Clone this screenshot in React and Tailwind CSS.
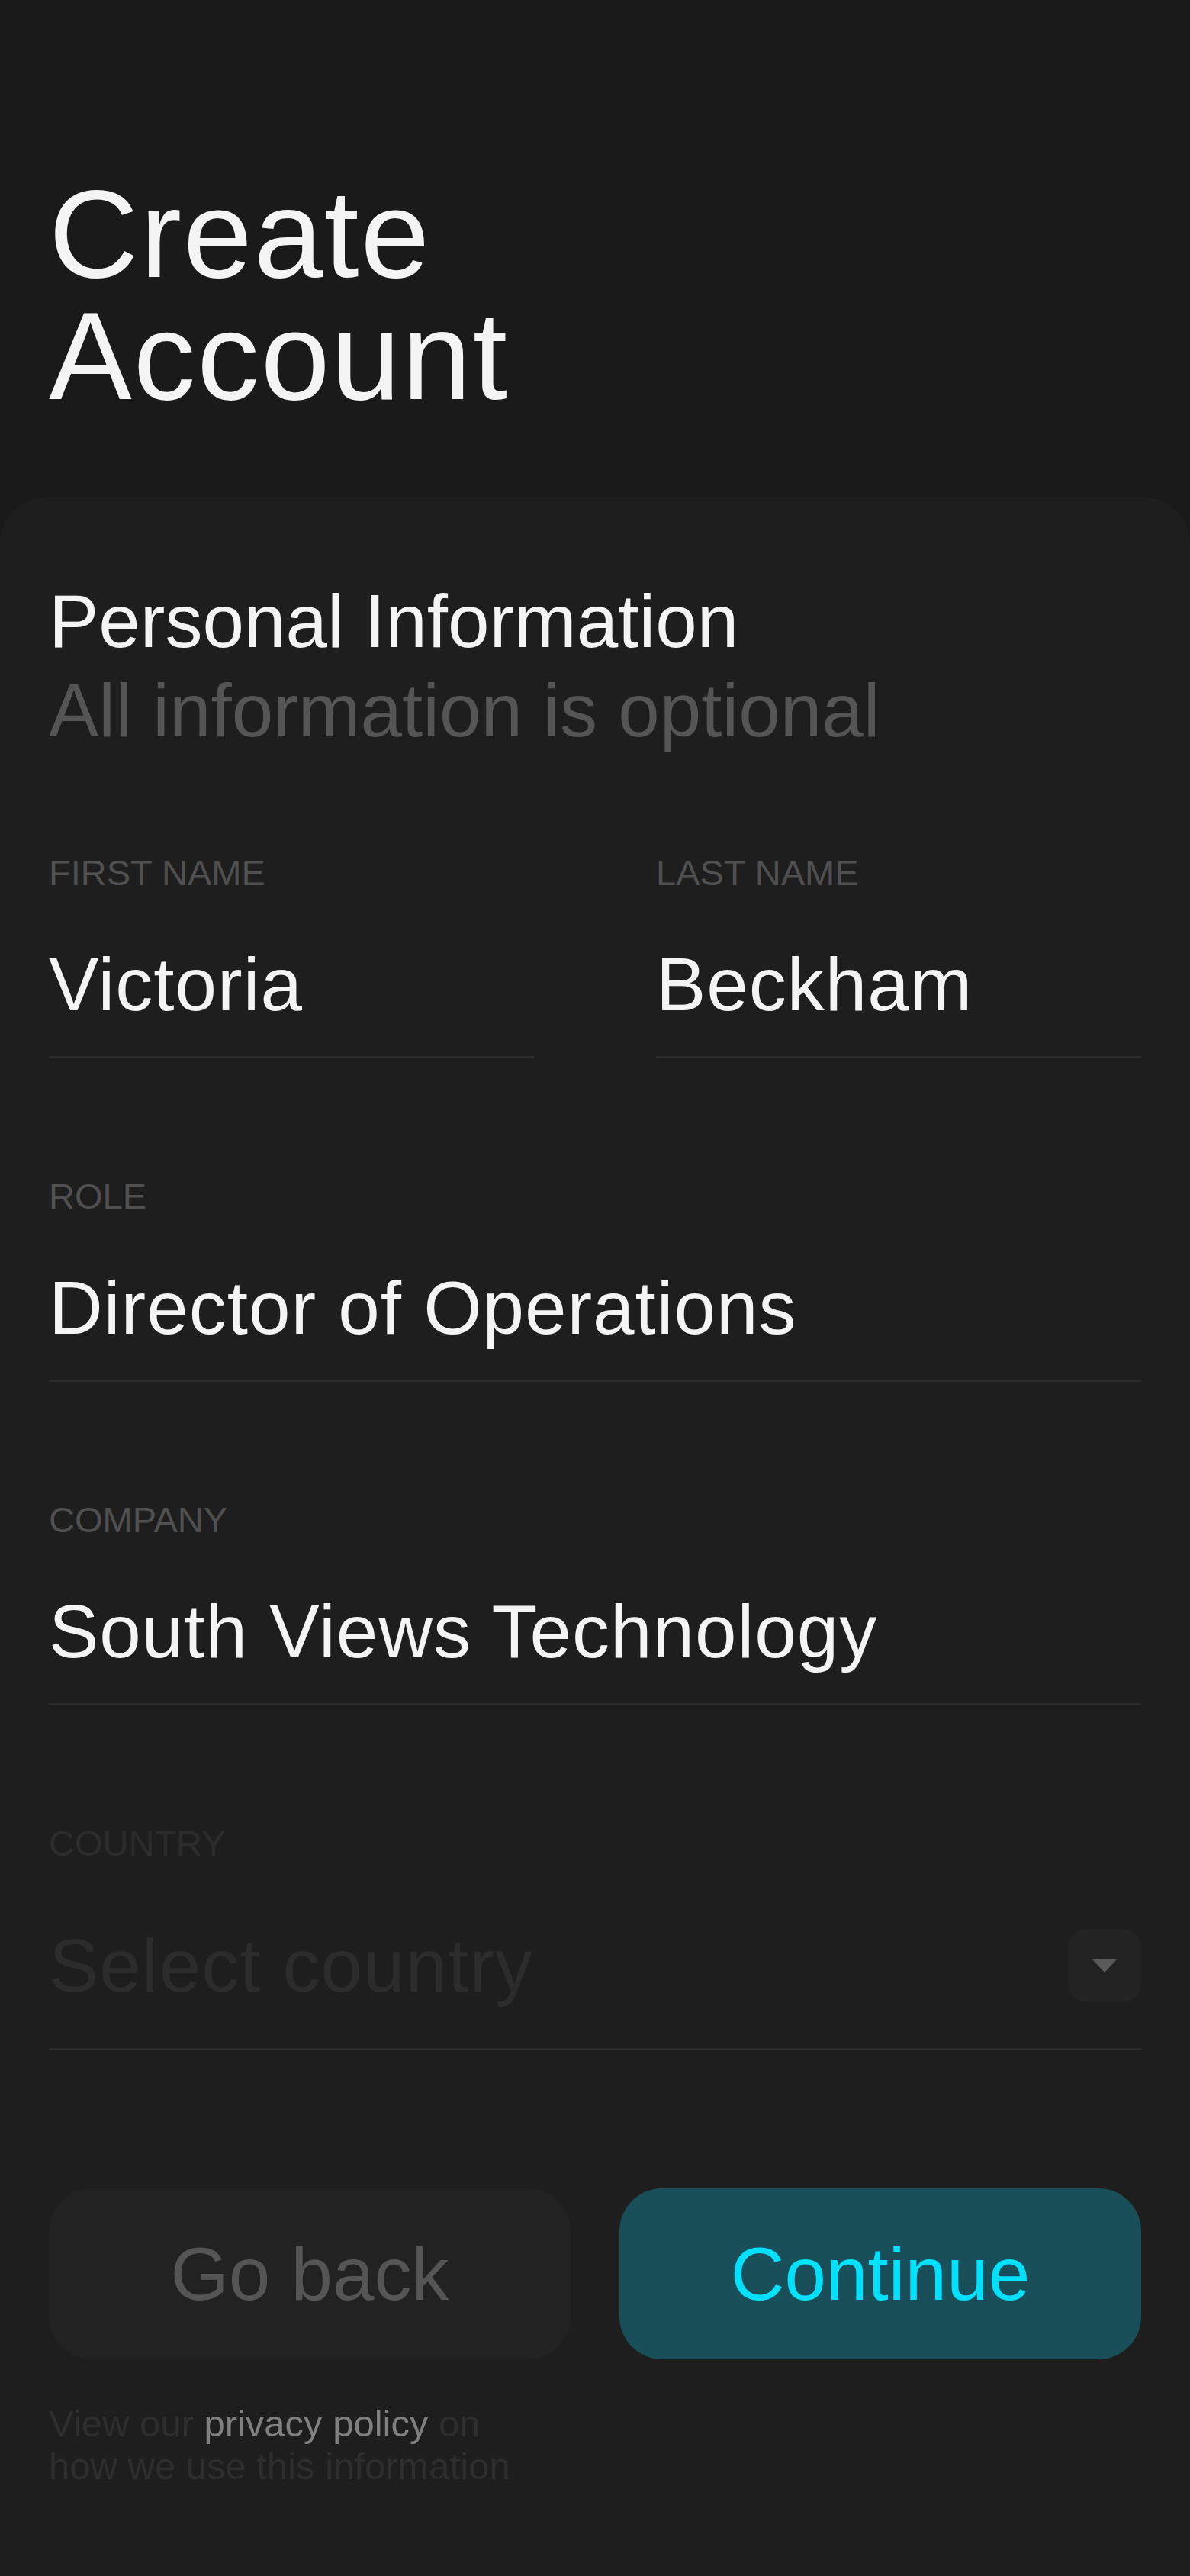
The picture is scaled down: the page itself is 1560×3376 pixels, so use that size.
import React from "react";

const font = { fontFamily: '"Liberation Sans", Arial, sans-serif' };

function Field({ label, value, className = "" }) {
  return (
    <div className={className}>
      <p className="text-[47px] leading-none text-[#505050]">{label}</p>
      <div className="mt-[74px] pb-[45px] border-b-[3px] border-[#2c2c2c]">
        <p className="text-[98px] leading-none tracking-[1px] text-[#f4f4f4] whitespace-nowrap">
          {value}
        </p>
      </div>
    </div>
  );
}

export default function App() {
  return (
    <div
      className="min-h-screen flex flex-col bg-[#1a1a1a]"
      style={font}
    >
      {/* page title */}
      <div className="px-16 pt-[227px] mb-[105px]">
        <h1 className="text-[163px] leading-[160px] tracking-[2px] text-[#f4f4f4]">
          Create
          <br />
          Account
        </h1>
      </div>

      {/* form sheet */}
      <main className="flex-1 bg-[#1e1e1e] rounded-t-[60px] px-16 pt-[104px] pb-[116px]">
        <div className="text-[98px] leading-[117px]">
          <h2 className="text-[#f4f4f4]">Personal Information</h2>
          <p className="text-[#555555]">All information is optional</p>
        </div>

        <div className="mt-[130px] grid grid-cols-2 gap-x-[160px]">
          <Field label="FIRST NAME" value="Victoria" />
          <Field label="LAST NAME" value="Beckham" />
        </div>

        <Field label="ROLE" value="Director of Operations" className="mt-[157px]" />
        <Field label="COMPANY" value="South Views Technology" className="mt-[157px]" />

        {/* country select, disabled look */}
        <div className="mt-[157px]">
          <p className="text-[47px] leading-none text-[#2c2c2c]">COUNTRY</p>
          <div className="mt-[88px] pb-[59px] border-b-[3px] border-[#2c2c2c] flex items-center justify-between">
            <p className="text-[98px] leading-none tracking-[1px] text-[#2c2c2c]">
              Select country
            </p>
            <div className="w-[96px] h-[96px] rounded-[24px] bg-[#232323] flex items-center justify-center">
              <svg width="32" height="17" viewBox="0 0 32 17">
                <path d="M0 0 L32 0 L16 17 Z" fill="#5a5a5a" />
              </svg>
            </div>
          </div>
        </div>

        <div className="mt-[181px] grid grid-cols-2 gap-16">
          <button className="h-[224px] rounded-[56px] bg-[#222222] text-[98px] leading-none text-[#555555]">
            Go back
          </button>
          <button className="h-[224px] rounded-[56px] bg-[#184f58] text-[98px] leading-none text-[#00e0ff]">
            Continue
          </button>
        </div>

        <p className="mt-[56px] text-[49px] leading-[56px] text-[#2e2e2e]">
          View our <span className="text-[#808080]">privacy policy</span> on
          <br />
          how we use this information
        </p>
      </main>
    </div>
  );
}
